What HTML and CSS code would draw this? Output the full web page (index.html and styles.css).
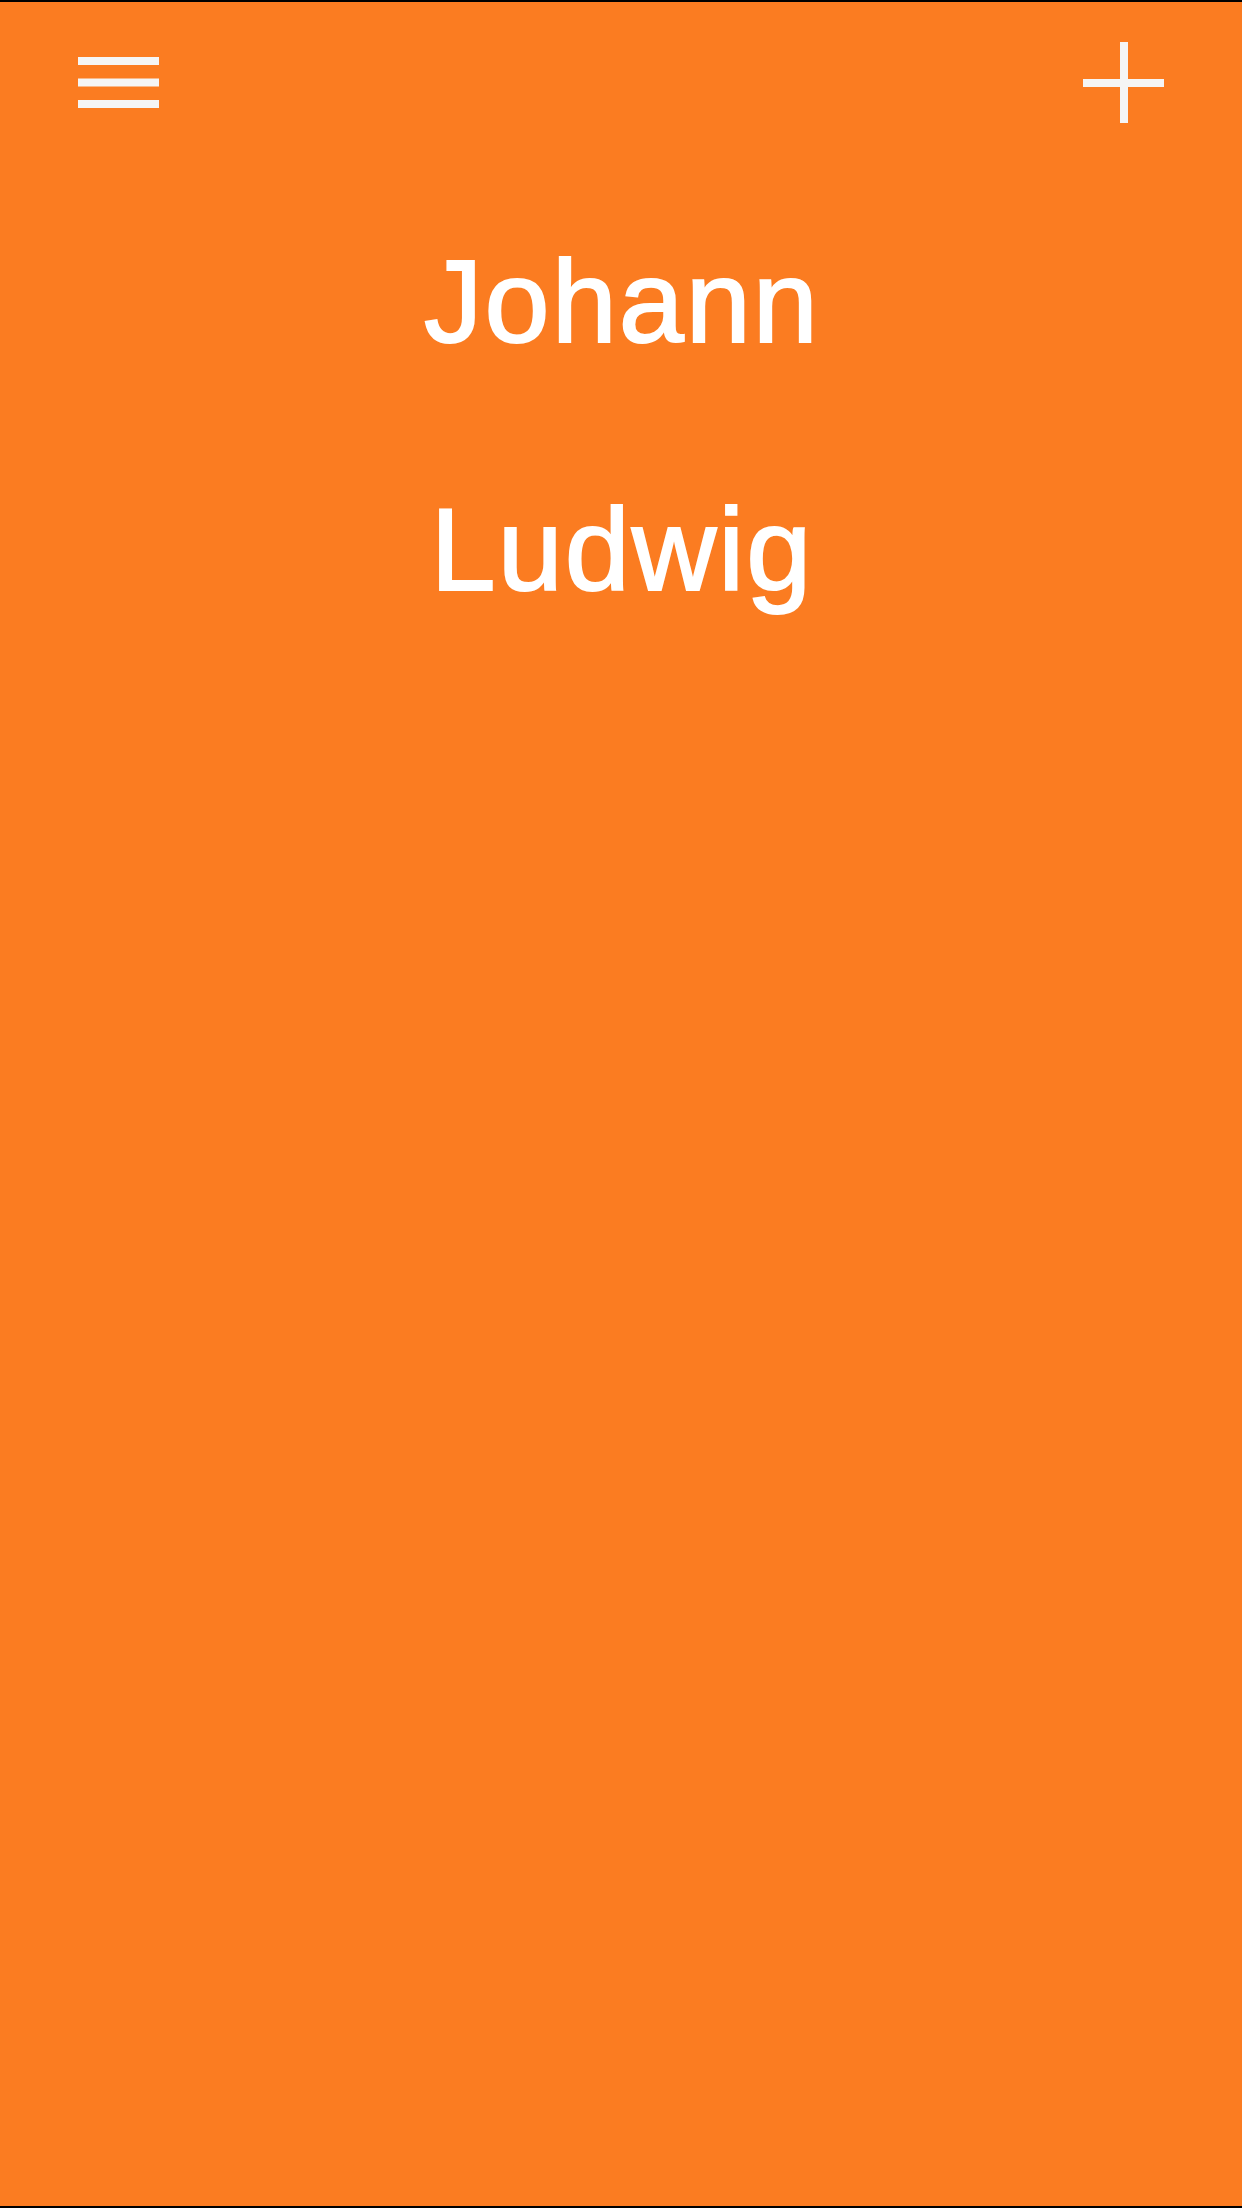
FILE: index.html
```html
<!DOCTYPE html>
<html lang="de">
<head>
<meta charset="utf-8">
<title>Names</title>
<link rel="stylesheet" href="styles.css">
</head>
<body>
<div class="screen">
  <header class="topbar">
    <button class="icon-btn" aria-label="Menu">
      <svg width="81" height="81" viewBox="0 0 81 81">
        <rect x="0" y="15" width="81" height="8" fill="#f5f5f5"/>
        <rect x="0" y="36.5" width="81" height="8" fill="#f5f5f5"/>
        <rect x="0" y="58" width="81" height="8" fill="#f5f5f5"/>
      </svg>
    </button>
    <button class="icon-btn" aria-label="Add">
      <svg width="81" height="81" viewBox="0 0 81 81">
        <rect x="0" y="37" width="81" height="8" fill="#f5f5f5"/>
        <rect x="37" y="0" width="8" height="81" fill="#f5f5f5"/>
      </svg>
    </button>
  </header>
  <ul class="names">
    <li class="name">Johann</li>
    <li class="name">Ludwig</li>
  </ul>
</div>
</body>
</html>
```
FILE: styles.css
```css
html, body {
  margin: 0;
  padding: 0;
}
body {
  background: #000;
}
.screen {
  box-sizing: border-box;
  width: 1242px;
  height: 2208px;
  border-top: 2px solid #000;
  border-bottom: 2px solid #000;
  background: #fb7c21;
  font-family: "Liberation Sans", Arial, sans-serif;
  color: #fff;
}
.topbar {
  display: flex;
  justify-content: space-between;
  align-items: center;
  padding: 40px 78px 0;
}
.icon-btn {
  display: block;
  padding: 0;
  margin: 0;
  border: 0;
  background: none;
  width: 81px;
  height: 81px;
}
.icon-btn svg {
  display: block;
}
.names {
  list-style: none;
  margin: 55px 0 0;
  padding: 0;
}
.name {
  text-align: center;
  font-size: 117px;
  line-height: 248px;
  font-weight: normal;
  letter-spacing: 2px;
  text-indent: 2px;
  -webkit-text-stroke: 2px #fff;
}
```
